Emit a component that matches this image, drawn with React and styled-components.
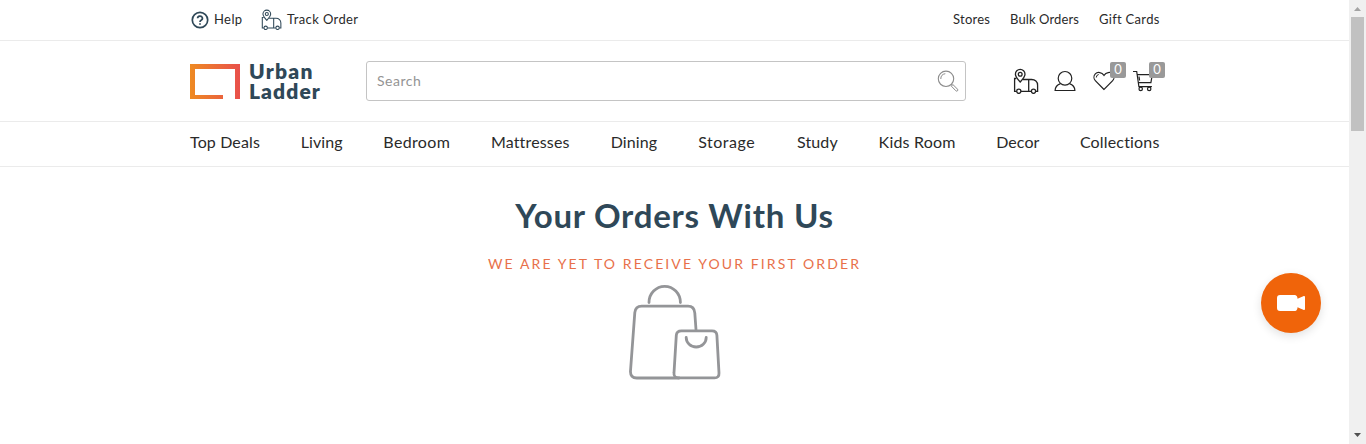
import React from "react";
import styled, { createGlobalStyle } from "styled-components";

const GlobalStyle = createGlobalStyle`
  * { box-sizing: border-box; }
  body { margin: 0; background: #fff; overflow: hidden; font-family: Lato, "Open Sans", sans-serif; color: #2a2a2a; }
  svg { display: block; }
`;

const Window = styled.div`
  display: flex;
  height: 444px;
`;

const Page = styled.div`
  position: relative;
  flex: 1;
  min-width: 0;
`;

const Band = styled.div`
  height: ${(p) => p.$height}px;
  border-bottom: 1px solid #ebebeb;
`;

const Container = styled.div`
  width: 970px;
  height: 100%;
  margin: 0 0 0 190px;
  display: flex;
  align-items: center;
`;

const TopLinks = styled.div`
  display: flex;
  gap: 20px;
  margin-left: auto;
`;

const TopLink = styled.a`
  display: flex;
  align-items: center;
  font-size: 13px;
  line-height: 38px;
  padding-bottom: 2px;
  white-space: nowrap;
  width: ${(p) => p.$width}px;
  letter-spacing: ${(p) => p.$spacing || 0}px;
`;

const HelpIcon = styled.svg`
  margin: 0 5px 0 1px;
`;

const TrackIcon = styled.div`
  margin: 0 5px 1px 19px;
`;

const Logo = styled.div`
  display: flex;
  align-items: flex-start;
  flex-shrink: 0;
  width: 176px;
`;

const LogoMark = styled.svg`
  margin: 3px 9px 0 0;
`;

const LogoText = styled.div`
  font-size: 21px;
  font-weight: 800;
  line-height: 20px;
  color: #2f4858;
`;

const Word = styled.div`
  letter-spacing: ${(p) => p.$spacing}px;
`;

const SearchBox = styled.div`
  display: flex;
  align-items: center;
  justify-content: space-between;
  flex-shrink: 0;
  width: 600px;
  height: 40px;
  padding: 0 6px 1px 10px;
  border: 1px solid #c4c4c4;
  border-radius: 3px;
  font-size: 14px;
  line-height: 18px;
  letter-spacing: 0.5px;
  color: #949494;
`;

const Actions = styled.div`
  display: flex;
  align-items: center;
  margin-left: 47px;
`;

const Action = styled.a`
  position: relative;
  flex-shrink: 0;
  width: ${(p) => p.$width}px;
`;

const Badge = styled.span`
  position: absolute;
  top: -8px;
  left: ${(p) => p.$left}px;
  width: 16px;
  height: 16px;
  border-radius: 2px;
  background: #999;
  color: #fff;
  font-size: 13px;
  line-height: 15px;
  text-align: center;
`;

const Nav = styled(Container)`
  justify-content: space-between;
  padding-bottom: 5px;
`;

const NavItem = styled.a`
  width: ${(p) => p.$width}px;
  font-size: 16px;
  line-height: 24px;
  white-space: nowrap;
  letter-spacing: ${(p) => p.$spacing}px;
`;

const Orders = styled.main`
  display: flex;
  flex-direction: column;
  align-items: center;
  padding-top: 27px;
`;

const Title = styled.h1`
  margin: 0;
  font-size: 33px;
  line-height: 42px;
  font-weight: 700;
  letter-spacing: 0.75px;
  color: #2f4858;
`;

const Notice = styled.p`
  margin: 18px 0 0;
  font-size: 14px;
  line-height: 20px;
  letter-spacing: 2.1px;
  color: #e8704a;
`;

const Bags = styled.svg`
  margin-top: 9px;
`;

const CallButton = styled.button`
  position: absolute;
  left: 1261px;
  top: 273px;
  width: 60px;
  height: 60px;
  padding: 0;
  border: 0;
  border-radius: 50%;
  background: #f0640a;
  box-shadow: 0 3px 10px rgba(0, 0, 0, 0.12);
  display: flex;
  align-items: center;
  justify-content: center;
`;

const ScrollTrack = styled.div`
  width: 17px;
  display: flex;
  flex-direction: column;
  align-items: center;
  justify-content: space-between;
  background: #f0f0f0;
`;

const ScrollThumb = styled.div`
  width: 13px;
  height: 114px;
  margin-bottom: auto;
  background: #c1c1c1;
`;

const Truck = ({ size = 26, color = "#222", stroke = 1.3 }) => (
  <svg width={size} height={size} viewBox="0 0 26 26" fill="none" stroke={color} strokeWidth={stroke}>
    <path d="M3.300 10.500H1.600v12.900h2M8 23.400h10.300M22.700 23.400h1.900v-6.200c0-3.500-2.500-5.700-6-5.700H10M15.700 11.500v11.900" />
    <path d="M7.200 14C4.200 10.800 2.400 8.600 2.400 6.200a4.800 4.800 0 0 1 9.600 0c0 2.400-1.900 4.600-4.800 7.800z" />
    <circle cx="7.200" cy="6.200" r="1.900" />
    <circle cx="5.800" cy="23.300" r="2.100" />
    <circle cx="20.500" cy="23.300" r="2.100" />
  </svg>
);

const NAV = [
  ["Top Deals", 70, 0.13],
  ["Living", 42, 0.1],
  ["Bedroom", 67, 0.35],
  ["Mattresses", 79, 0.15],
  ["Dining", 47, 0.1],
  ["Storage", 58, 0.5],
  ["Study", 41, 0.15],
  ["Kids Room", 77, 0.2],
  ["Decor", 43, 0.05],
  ["Collections", 80, 0.17],
];

export default function App() {
  return (
    <>
      <GlobalStyle />
      <Window>
        <Page>
          <Band $height={41}>
            <Container>
              <HelpIcon width="18" height="18" viewBox="0 0 18 18" fill="none" stroke="#2f4858" strokeWidth="1.7">
                <circle cx="9" cy="9" r="7.700" />
                <path d="M6.600 7.200a2.400 2.200 0 1 1 3.500 2c-.9.500-1.100.8-1.100 1.700M9 12.200v1.600" />
              </HelpIcon>
              <TopLink $width={28} $spacing={0.4}>Help</TopLink>
              <TrackIcon>
                <Truck size={21} color="#2f4858" />
              </TrackIcon>
              <TopLink $width={71} $spacing={0.4}>Track Order</TopLink>
              <TopLinks>
                <TopLink $width={37} $spacing={0.25}>Stores</TopLink>
                <TopLink $width={69} $spacing={0.12}>Bulk Orders</TopLink>
                <TopLink $width={61} $spacing={0.3}>Gift Cards</TopLink>
              </TopLinks>
            </Container>
          </Band>
          <Band $height={81}>
            <Container>
              <Logo>
                <LogoMark width="50" height="35" viewBox="0 0 50 35">
                  <defs>
                    <linearGradient id="flame" x1="0" x2="1">
                      <stop offset="0" stopColor="#ee8a22" />
                      <stop offset="1" stopColor="#e9504b" />
                    </linearGradient>
                  </defs>
                  <path d="M0 0H50V35H45V5H5V31H33V35H0Z" fill="url(#flame)" />
                </LogoMark>
                <LogoText>
                  <Word $spacing={1.3}>Urban</Word>
                  <Word $spacing={1.1}>Ladder</Word>
                </LogoText>
              </Logo>
              <SearchBox>
                Search
                <svg width="23" height="22" viewBox="0 0 23 22" fill="none" stroke="#8c8c8c">
                  <circle cx="10" cy="8.800" r="7.700" strokeWidth="1.100" />
                  <path d="M4.800 9a5.300 5.300 0 0 1 4.500-5.300M15.500 14.300l1 1" />
                  <path d="M15.300 16.100l1.600-1.600 4.600 4.700a1.100 1.100 0 0 1-1.600 1.600z" />
                </svg>
              </SearchBox>
              <Actions>
                <Action $width={41}>
                  <Truck />
                </Action>
                <Action $width={39}>
                  <svg width="22" height="22" viewBox="0 0 22 22" fill="none" stroke="#222" strokeWidth="1.200">
                    <circle cx="11" cy="8.300" r="6.800" />
                    <path d="M6.500 13.600C3 14.800 1.200 17.400 1.100 20.500h19.800c-.1-3.100-1.900-5.700-5.400-6.900" />
                  </svg>
                </Action>
                <Action $width={40}>
                  <svg width="22" height="22" viewBox="0 0 22 22" fill="none" stroke="#222" strokeWidth="1.200">
                    <path d="M11 19.500L2.300 10.600a4.900 4.900 0 0 1 0-6.700c2.300-2.400 6.600-1.700 8.700 1.500 2-3.200 6.400-3.900 8.700-1.500a4.900 4.900 0 0 1 0 6.700z" />
                    <path d="M3.300 7.500a3 3 0 0 1 2.400-3" strokeWidth="1" />
                  </svg>
                  <Badge $left={17}>0</Badge>
                </Action>
                <Action $width={27}>
                  <svg width="22" height="22" viewBox="0 0 22 22" fill="none" stroke="#222" strokeWidth="1.200">
                    <path d="M0 1.500h3.700l2.200 15.100h13M4.300 4.600h15l-1.400 8H5.300M6 6.500l.6 4" />
                    <circle cx="7.700" cy="18.900" r="1.700" />
                    <circle cx="16.200" cy="18.900" r="1.700" />
                  </svg>
                  <Badge $left={16}>0</Badge>
                </Action>
              </Actions>
            </Container>
          </Band>
          <Band $height={45}>
            <Nav>
              {NAV.map(([label, width, spacing]) => (
                <NavItem key={label} $width={width} $spacing={spacing}>{label}</NavItem>
              ))}
            </Nav>
          </Band>
          <Orders>
            <Title>Your Orders With Us</Title>
            <Notice>WE ARE YET TO RECEIVE YOUR FIRST ORDER</Notice>
            <Bags width="92" height="98" viewBox="0 0 92 98" fill="none" stroke="#949598" strokeWidth="2.800" strokeLinecap="round">
              <path d="M20 19.500a15.700 16.200 0 0 1 31.400 0" />
              <path d="M67 46.500L65.800 30c-.3-4.500-2.400-6.900-6.800-6.900H12.700c-4 0-6.500 2.400-6.900 6.500L1.500 88c-.3 4.500 2 7 6.300 7H50" />
              <path d="M52.500 47.900h30.500c3 0 4.700 1.500 4.900 4.500l2.100 37.600c.2 3-1.400 4.900-4.400 4.900H49.300c-3 0-4.600-1.800-4.300-4.900l2.300-37.600c.2-3 2.100-4.500 5.200-4.500z" />
              <path d="M57.200 54.500a10 9.500 0 0 0 20 0" />
            </Bags>
          </Orders>
          <CallButton aria-label="Video call">
            <svg width="28" height="16" viewBox="0 0 28 16" fill="#fff">
              <path d="M3 0H18Q20.500 .5 20.500 3.800L26.800 1Q28 .7 28 2V14Q28 15.300 26.800 15L20.500 12.200Q20.500 15.500 18 16H3Q0 16 0 13V3Q0 0 3 0Z" />
            </svg>
          </CallButton>
        </Page>
        <ScrollTrack>
          <svg width="17" height="17" viewBox="0 0 17 17" fill="#a3a3a3">
            <path d="M5 11h7L8.500 7z" />
          </svg>
          <ScrollThumb />
          <svg width="17" height="17" viewBox="0 0 17 17" fill="#505050">
            <path d="M5 6h7L8.500 10z" />
          </svg>
        </ScrollTrack>
      </Window>
    </>
  );
}
